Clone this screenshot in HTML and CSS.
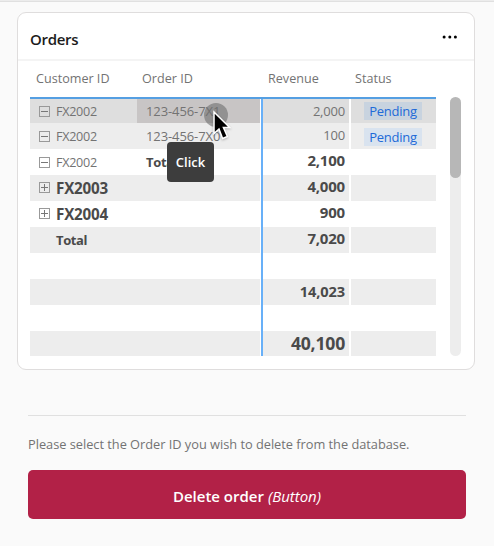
FILE: index.html
```html
<!DOCTYPE html>
<html lang="en">
<head>
<meta charset="utf-8">
<title>Orders</title>
<link rel="stylesheet" href="styles.css">
</head>
<body>
<main>
  <section class="card">
    <header class="card-head">
      <h1>Orders</h1>
      <svg class="more" width="16" height="4" viewBox="0 0 16 4"><circle cx="2.1" cy="2" r="1.5"/><circle cx="7.8" cy="2" r="1.5"/><circle cx="13.4" cy="2" r="1.5"/></svg>
    </header>
    <div class="columns"><span>Customer ID</span><span>Order ID</span><span>Revenue</span><span>Status</span></div>
    <div class="body">
      <div class="grid">
        <div class="pane ids">
          <div class="row selected"><div class="cell"><i class="toggle"></i><span>FX2002</span></div><div class="cell order active">123-456-7X1</div></div>
          <div class="row shade"><div class="cell"><i class="toggle"></i><span>FX2002</span></div><div class="cell order">123-456-7X0</div></div>
          <div class="row"><div class="cell"><i class="toggle"></i><span>FX2002</span></div><div class="cell order strong">Total</div></div>
          <div class="row shade"><div class="cell group"><i class="toggle plus"></i><span>FX2003</span></div></div>
          <div class="row"><div class="cell group"><i class="toggle plus"></i><span>FX2004</span></div></div>
          <div class="row shade"><div class="cell total">Total</div></div>
          <div class="row"></div>
          <div class="row shade"></div>
          <div class="row"></div>
          <div class="row shade"></div>
        </div>
        <div class="divider"></div>
        <div class="pane values">
          <div class="row selected"><div class="num">2,000</div><div class="status"><span class="tag">Pending</span></div></div>
          <div class="row shade"><div class="num">100</div><div class="status"><span class="tag">Pending</span></div></div>
          <div class="row"><div class="num sum">2,100</div><div class="status"></div></div>
          <div class="row shade"><div class="num sum">4,000</div><div class="status"></div></div>
          <div class="row"><div class="num sum">900</div><div class="status"></div></div>
          <div class="row shade"><div class="num sum">7,020</div><div class="status"></div></div>
          <div class="row"><div class="num"></div><div class="status"></div></div>
          <div class="row shade"><div class="num sum small">14,023</div><div class="status"></div></div>
          <div class="row"><div class="num"></div><div class="status"></div></div>
          <div class="row shade"><div class="num sum large">40,100</div><div class="status"></div></div>
        </div>
      </div>
      <div class="scrollbar"><div class="thumb"></div></div>
    </div>
  </section>
  <section class="action">
    <p>Please select the Order ID you wish to delete from the database.</p>
    <button type="button"><b>Delete order</b> <em>(Button)</em></button>
  </section>
</main>
<div class="press"></div>
<div class="tooltip">Click</div>
<svg class="cursor" width="24" height="36" viewBox="0 0 24 36"><path d="M4 3V24.5L9 20L12.6 29.5L17.4 27.5L13.4 18.4H19.6Z"/></svg>
</body>
</html>
```
FILE: styles.css
```css
* { box-sizing: border-box; }
body {
  margin: 0;
  height: 546px;
  overflow: hidden;
  position: relative;
  background: #fafafa;
  border-top: 1px solid #ececec;
  box-shadow: inset 0 1px #e0e0e0;
  color: #737373;
  font-family: "Open Sans", "Noto Sans", sans-serif;
  font-size: 12.6px;
}
main { padding: 11px 19px 0 17px; }
.card {
  width: 458px;
  height: 358px;
  background: #fff;
  border: 1px solid #dfdddd;
  border-radius: 9px;
}
.card-head {
  height: 48px;
  display: flex;
  justify-content: space-between;
  align-items: center;
  padding: 6px 16px 0 12px;
  border-bottom: 2px solid #f4f4f4;
}
h1 { margin: 0; font-size: 15px; font-weight: 600; color: #1c1c1c; letter-spacing: -.3px; line-height: 20px; }
.more { fill: #000; position: relative; top: -2px; }
.columns {
  display: grid;
  grid-template-columns: 106px 126px 87px 60px;
  padding-left: 18px;
  height: 36px;
  line-height: 36px;
}
.body { display: flex; gap: 14px; padding-left: 12px; }
.grid { width: 406px; height: 259px; display: flex; border-top: 2px solid #559fe2; }
.pane { display: flex; flex-direction: column; }
.row { height: 26px; flex: none; display: flex; }
.row:first-child { height: 24px; }
.row:last-child { height: 25px; }
.ids { width: 230px; }
.divider { width: 2px; height: 257px; margin-left: 1px; background: #68b0f8; }
.values { width: 173px; }
.ids .shade { background: #ededed; }
.ids .selected { background: #dedede; }
.cell { width: 107px; display: flex; align-items: center; padding: 0 0 0 9px; gap: 6px; letter-spacing: -.3px; }
.order { width: 123px; padding-left: 9px; font-size: 13px; letter-spacing: -.1px; }
.active { background: #c8c5c5; }
.strong, .total { color: #4a4a4a; font-weight: 700; }
.total { padding: 0 0 1px 26px; font-size: 13px; letter-spacing: -.4px; }
.order.strong { letter-spacing: -.3px; }
.group { color: #4a4a4a; font-size: 15.2px; font-weight: 700; letter-spacing: -.2px; padding-bottom: 1px; }
.toggle {
  flex: none;
  width: 11px;
  height: 11px;
  border: 1px solid #999;
  background: linear-gradient(#777, #777) center / 7px 1px no-repeat;
}
.toggle.plus { background: linear-gradient(#777, #777) center / 7px 1px no-repeat, linear-gradient(#777, #777) center / 1px 7px no-repeat; }
.values .row { gap: 2px; }
.num { width: 86px; padding-right: 4px; text-align: right; line-height: 25px; font-size: 13px; letter-spacing: -.2px; }
.selected .num { line-height: 24px; }
.status { width: 85px; padding: 5px 0 0 13px; }
.selected .status { padding-top: 3px; }
.shade .num, .shade .status { background: #ededed; }
.selected .num, .selected .status { background: #dedede; }
.tag { display: block; width: 58px; height: 18px; line-height: 19px; background: #d9e3ef; color: #216ad8; text-align: center; font-size: 13px; letter-spacing: -.25px; }
.selected .tag { background: #c8d3df; }
.num.sum { color: #4a4a4a; font-size: 15px; font-weight: 700; line-height: 23px; }
.num.small { font-size: 14.6px; letter-spacing: -.1px; line-height: 24px; }
.num.large { font-size: 17.6px; line-height: 25px; }
.scrollbar { width: 11px; height: 259px; background: #ededed; border-radius: 6px; }
.thumb { width: 11px; height: 81px; background: #b7b7b7; border-radius: 6px; }
.action { margin: 45px 9px 0 11px; border-top: 1px solid #e0e0e0; }
.action p { margin: 18px 0 16px; line-height: 20px; font-size: 12.8px; letter-spacing: -.02px; white-space: nowrap; }
button {
  display: block;
  width: 100%;
  height: 49px;
  padding: 2px 0 0;
  border: 0;
  border-radius: 5px;
  background: #b22147;
  color: #fff;
  font: 15px "Open Sans", "Noto Sans", sans-serif;
}
button b { font-weight: 600; }
.press { position: absolute; left: 204px; top: 102px; width: 24px; height: 24px; border-radius: 50%; background: rgba(110, 110, 110, .6); }
.tooltip {
  position: absolute;
  left: 167px;
  top: 141px;
  width: 47px;
  height: 40px;
  border-radius: 4px;
  background: #3d3d3d;
  color: #fff;
  font-size: 13px;
  font-weight: 600;
  line-height: 41px;
  text-align: center;
}
.cursor { position: absolute; left: 210px; top: 108px; fill: #000; stroke: #fff; stroke-width: 1.5; filter: drop-shadow(0 1px 1px rgba(0, 0, 0, .25)); }
```
